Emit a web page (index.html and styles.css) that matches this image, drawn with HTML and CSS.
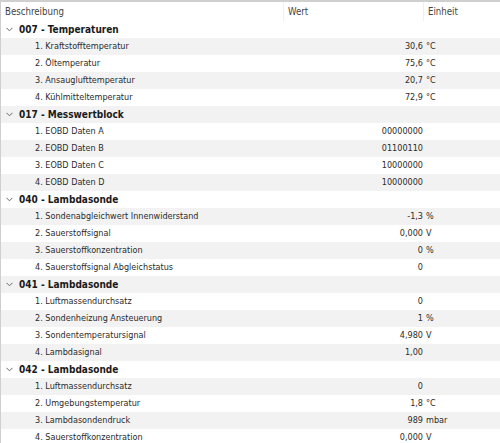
FILE: index.html
```html
<!DOCTYPE html>
<html lang="de">
<head>
<meta charset="utf-8">
<title>Messwerte</title>
<link rel="stylesheet" href="styles.css">
</head>
<body>
<div class="table">
  <div class="head">
    <div class="hc">Beschreibung</div>
    <div class="hc hc-val">Wert</div>
    <div class="hc hc-unit">Einheit</div>
  </div>

  <div class="row group"><span class="chev"><svg width="7" height="5" viewBox="0 0 7 5"><polyline points="0.5,0.8 3.5,3.8 6.5,0.8" fill="none" stroke="#666" stroke-width="1"/></svg></span>007 - Temperaturen</div>
  <div class="row item"><span class="d">1. Kraftstofftemperatur</span><span class="v">30,6</span><span class="u">°C</span></div>
  <div class="row item"><span class="d">2. Öltemperatur</span><span class="v">75,6</span><span class="u">°C</span></div>
  <div class="row item"><span class="d">3. Ansauglufttemperatur</span><span class="v">20,7</span><span class="u">°C</span></div>
  <div class="row item"><span class="d">4. Kühlmitteltemperatur</span><span class="v">72,9</span><span class="u">°C</span></div>

  <div class="row group"><span class="chev"><svg width="7" height="5" viewBox="0 0 7 5"><polyline points="0.5,0.8 3.5,3.8 6.5,0.8" fill="none" stroke="#666" stroke-width="1"/></svg></span>017 - Messwertblock</div>
  <div class="row item"><span class="d">1. EOBD Daten A</span><span class="v">00000000</span><span class="u"></span></div>
  <div class="row item"><span class="d">2. EOBD Daten B</span><span class="v">01100110</span><span class="u"></span></div>
  <div class="row item"><span class="d">3. EOBD Daten C</span><span class="v">10000000</span><span class="u"></span></div>
  <div class="row item"><span class="d">4. EOBD Daten D</span><span class="v">10000000</span><span class="u"></span></div>

  <div class="row group"><span class="chev"><svg width="7" height="5" viewBox="0 0 7 5"><polyline points="0.5,0.8 3.5,3.8 6.5,0.8" fill="none" stroke="#666" stroke-width="1"/></svg></span>040 - Lambdasonde</div>
  <div class="row item"><span class="d">1. Sondenabgleichwert Innenwiderstand</span><span class="v">-1,3</span><span class="u">%</span></div>
  <div class="row item"><span class="d">2. Sauerstoffsignal</span><span class="v">0,000</span><span class="u">V</span></div>
  <div class="row item"><span class="d">3. Sauerstoffkonzentration</span><span class="v">0</span><span class="u">%</span></div>
  <div class="row item"><span class="d">4. Sauerstoffsignal Abgleichstatus</span><span class="v">0</span><span class="u"></span></div>

  <div class="row group"><span class="chev"><svg width="7" height="5" viewBox="0 0 7 5"><polyline points="0.5,0.8 3.5,3.8 6.5,0.8" fill="none" stroke="#666" stroke-width="1"/></svg></span>041 - Lambdasonde</div>
  <div class="row item"><span class="d">1. Luftmassendurchsatz</span><span class="v">0</span><span class="u"></span></div>
  <div class="row item"><span class="d">2. Sondenheizung Ansteuerung</span><span class="v">1</span><span class="u">%</span></div>
  <div class="row item"><span class="d">3. Sondentemperatursignal</span><span class="v">4,980</span><span class="u">V</span></div>
  <div class="row item"><span class="d">4. Lambdasignal</span><span class="v">1,00</span><span class="u"></span></div>

  <div class="row group"><span class="chev"><svg width="7" height="5" viewBox="0 0 7 5"><polyline points="0.5,0.8 3.5,3.8 6.5,0.8" fill="none" stroke="#666" stroke-width="1"/></svg></span>042 - Lambdasonde</div>
  <div class="row item"><span class="d">1. Luftmassendurchsatz</span><span class="v">0</span><span class="u"></span></div>
  <div class="row item"><span class="d">2. Umgebungstemperatur</span><span class="v">1,8</span><span class="u">°C</span></div>
  <div class="row item"><span class="d">3. Lambdasondendruck</span><span class="v">989</span><span class="u">mbar</span></div>
  <div class="row item"><span class="d">4. Sauerstoffkonzentration</span><span class="v">0,000</span><span class="u">V</span></div>
</div>
</body>
</html>
```

FILE: styles.css
```css
html, body {
  margin: 0;
  padding: 0;
  background: #ffffff;
  overflow: hidden;
}

body {
  width: 500px;
  height: 443px;
  font-family: "DejaVu Sans Condensed", "DejaVu Sans", sans-serif;
  font-size: 9px;
  color: #2b2b2b;
}

.table {
  border-top: 2px solid #cfcfcf;
  border-left: 1px solid #cfcfcf;
  height: 441px;
  overflow: hidden;
}

.head {
  display: grid;
  grid-template-columns: 282px 140px 1fr;
  height: 19px;
  align-items: center;
  color: #444;
  font-size: 9.6px;
}

.hc {
  padding-left: 4px;
  height: 19px;
  line-height: 19px;
}

.hc-val {
  border-left: 1px solid #f0f0f0;
  padding-left: 4px;
}

.hc-unit {
  border-left: 1px solid #f0f0f0;
  padding-left: 4px;
}

.row {
  height: 17px;
  line-height: 17px;
  white-space: nowrap;
}

.row:nth-child(odd) {
  background: #f2f2f2;
}

.group {
  display: flex;
  align-items: center;
  font-weight: bold;
  font-size: 10px;
  color: #1a1a1a;
}

.chev {
  display: flex;
  width: 13px;
  padding-left: 5px;
}

.item {
  display: grid;
  grid-template-columns: 282px 140px 1fr;
}

.d {
  padding-left: 34px;
}

.v {
  text-align: right;
}

.u {
  padding-left: 3px;
}
```
